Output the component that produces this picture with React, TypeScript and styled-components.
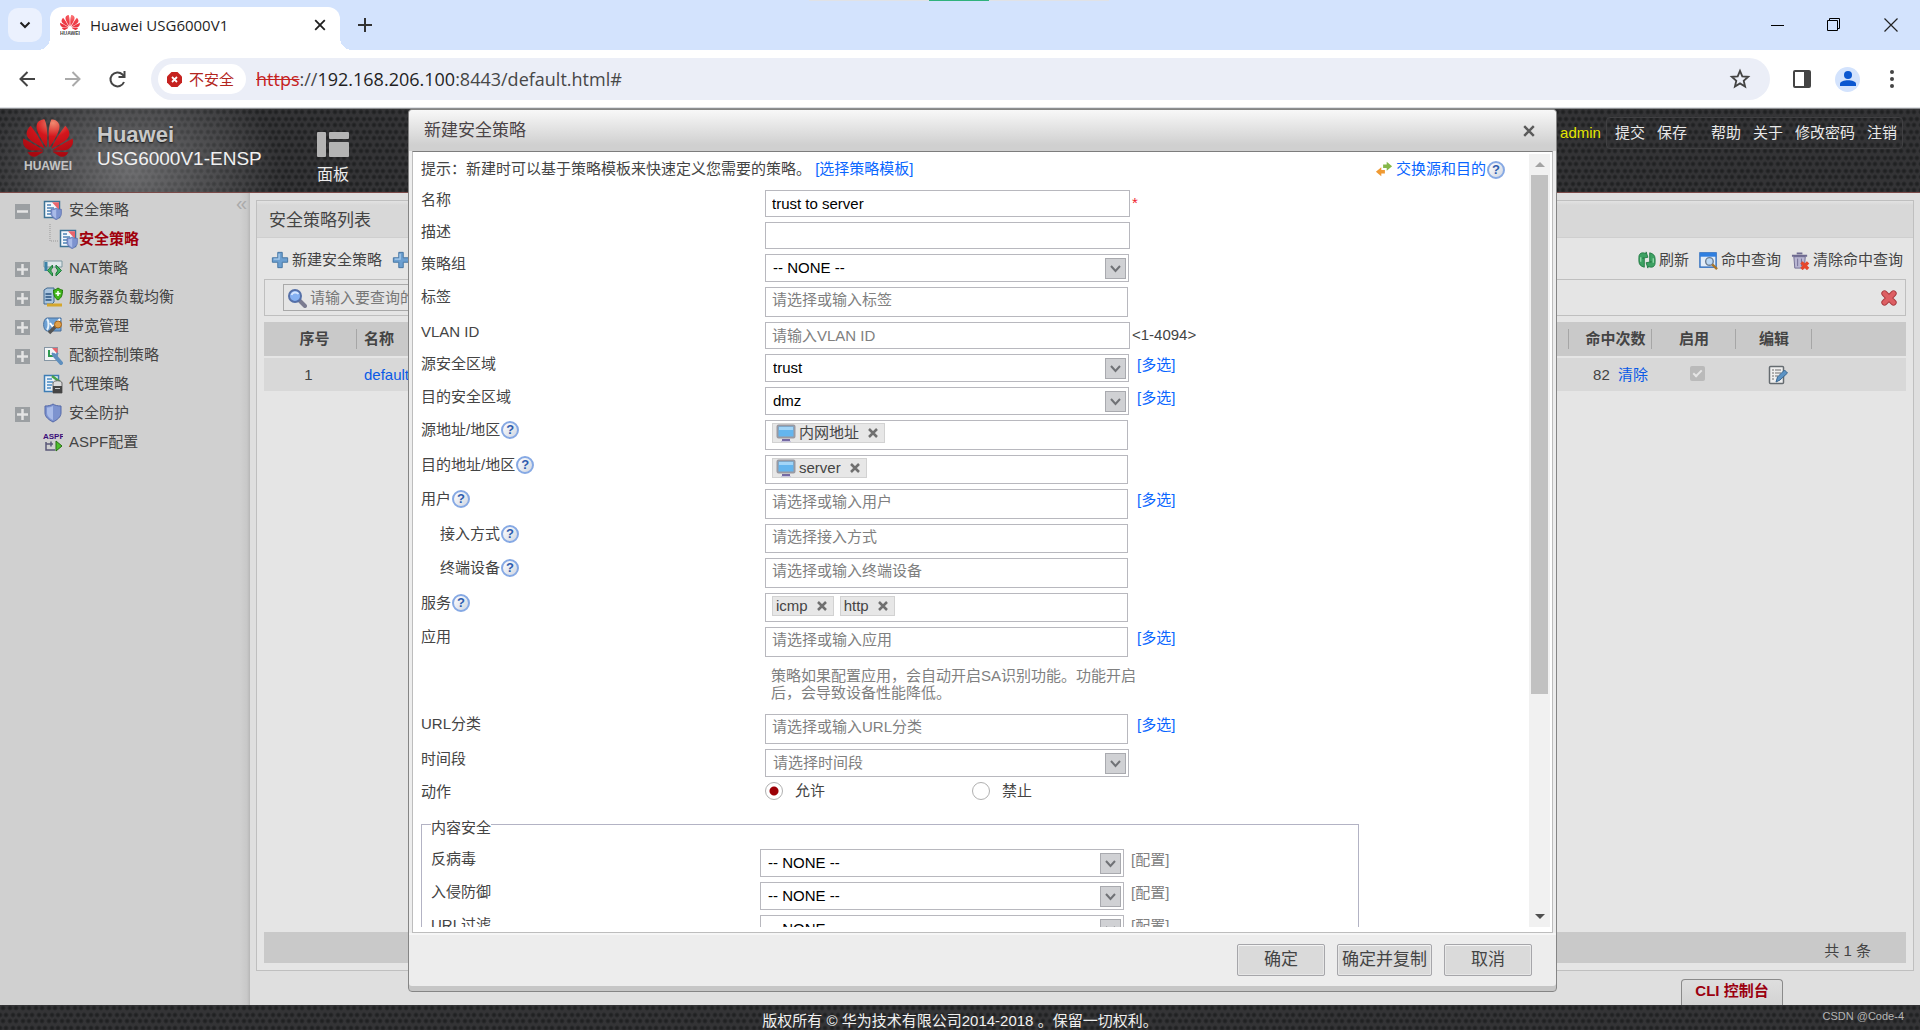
import React from "react";
import styled, { createGlobalStyle, css } from "styled-components";

const UI = `"Liberation Sans", "Noto Sans CJK SC", sans-serif`;
const CHROME = `"Open Sans", "Noto Sans CJK SC", sans-serif`;

const Global = createGlobalStyle`
  *, *::before, *::after { box-sizing: border-box; }
  body { margin: 0; background: #dfdfdf; font: 15px/18px ${UI}; color: #444; }
  button, input, select { font: inherit; color: inherit; }
  button { background: none; border: 0; padding: 0; cursor: pointer; }
  a { text-decoration: none; color: inherit; }
  svg { display: block; flex: none; }
`;

const dots = css`
  background-color: #343436;
  background-image: radial-gradient(circle at 3px 3px, #202122 1px, transparent 3px),
    radial-gradient(circle at 10px 3px, #202122 1px, transparent 3px),
    radial-gradient(circle at 6px 10px, #202122 1px, transparent 3px),
    radial-gradient(circle at 13px 10px, #202122 1px, transparent 3px),
    radial-gradient(circle at 0 10px, #202122 1px, transparent 3px);
  background-size: 13px 13px;
`;

const Page = styled.div`
  display: flex;
  flex-direction: column;
  min-height: 100vh;
  position: relative;
`;

/* ---------- browser frame ---------- */
const TabStrip = styled.div`
  display: flex;
  align-items: flex-end;
  height: 50px;
  background: #d3e3fd;
  position: relative;
`;
const TabMenu = styled.button`
  display: grid;
  place-items: center;
  width: 34px;
  height: 34px;
  margin: 0 8px 8px;
  border-radius: 10px;
  background: #ebf1fe;
`;
const Tab = styled.div`
  display: flex;
  align-items: center;
  width: 290px;
  height: 43px;
  padding: 0 14px 8px 10px;
  background: #fff;
  border-radius: 12px 12px 0 0;
  font: 15px/20px ${CHROME};
  color: #1f1f1f;
  position: relative;
  &::before, &::after {
    content: "";
    position: absolute;
    bottom: 0;
    width: 12px;
    height: 12px;
  }
  &::before { left: -12px; background: radial-gradient(circle at 0 0, transparent 12px, #fff 12px); }
  &::after { right: -12px; background: radial-gradient(circle at 100% 0, transparent 12px, #fff 12px); }
`;
const TabTitle = styled.span`
  flex: 1;
  padding-left: 10px;
`;
const NewTab = styled.button`
  margin: 0 0 18px 18px;
`;
const LoadHint = styled.div`
  position: absolute;
  top: 0;
  left: 50%;
  width: 300px;
  height: 1px;
  margin-left: -151px;
  background: linear-gradient(90deg, #e0e2e6 120px, #2fb27c 120px, #2fb27c 180px, #e0e2e6 180px);
`;
const WindowButtons = styled.div`
  display: flex;
  gap: 43px;
  margin: 0 22px 18px auto;
`;
const Toolbar = styled.div`
  display: flex;
  align-items: center;
  height: 59px;
  padding: 0 18px 0 16px;
  background: #fff;
  border-bottom: 1px solid #8d8f92;
  box-shadow: inset 0 -1px #dfe1e5;
`;
const NavButtons = styled.div`
  display: flex;
  gap: 22px;
  padding-right: 22px;
`;
const Omnibox = styled.div`
  display: flex;
  flex: 1;
  align-items: center;
  height: 42px;
  padding: 0 18px 0 7px;
  border-radius: 21px;
  background: #ebeef7;
`;
const Chip = styled.span`
  display: flex;
  align-items: center;
  gap: 7px;
  height: 30px;
  padding: 0 12px 0 9px;
  border-radius: 15px;
  background: #fff;
  color: #b3261e;
  font: 15px/20px ${CHROME};
`;
const Url = styled.span`
  flex: 1;
  padding-left: 10px;
  font: 18px/24px ${CHROME};
  color: #474747;
  s { color: #c5221f; }
  b { font-weight: 400; color: #1f1f1f; }
`;
const Avatar = styled.span`
  display: grid;
  place-items: center;
  width: 25px;
  height: 25px;
  margin: 0 22px 0 24px;
  border-radius: 50%;
  background: #d3e3fd;
`;
const ToolGroup = styled.div`
  display: flex;
  align-items: center;
  padding-left: 23px;
`;

/* ---------- product header ---------- */
const Header = styled.header`
  ${dots}
  height: 84px;
  border-bottom: 1px solid #7a4a48;
`;
const HeaderGlow = styled.div`
  display: flex;
  height: 100%;
  padding: 10px 17px 0 23px;
  background: radial-gradient(ellipse 150px 110px at 130px 60px, rgba(170, 170, 172, 0.5), transparent);
`;
const Brand = styled.div`
  display: flex;
  flex-direction: column;
  align-items: center;
  width: 50px;
  font-size: 12px;
  font-weight: 700;
  color: #c4c4c4;
`;
const Product = styled.div`
  padding: 4px 0 0 24px;
  width: 244px;
  font-size: 19px;
  line-height: 24px;
  color: #f0f0f0;
  strong { display: block; font-size: 22px; color: #c9c9c9; text-shadow: 0 1px 2px #111; }
`;
const PanelLink = styled.a`
  display: flex;
  flex-direction: column;
  gap: 8px;
  padding-top: 13px;
  font-size: 16px;
  line-height: 20px;
  color: #ececec;
`;
const UserNav = styled.nav`
  display: flex;
  align-items: center;
  margin-left: auto;
  height: 32px;
  margin-top: -2px;
  color: #e8e8e8;
`;
const UserName = styled.span`
  padding-right: 5px;
  color: #e4e400;
`;
const NavBox = styled.div`
  display: flex;
  align-items: center;
  gap: 12px;
  height: 32px;
  padding: 0 5px 0 8px;
  border: 1px solid #404042;
  border-radius: 4px;
`;
const NavPair = styled.span`
  display: flex;
  gap: 12px;
  padding-right: 12px;
`;

/* ---------- body ---------- */
const Body = styled.div`
  display: flex;
  flex: 1;
`;
const Sidebar = styled.nav`
  position: relative;
  width: 250px;
  padding: 2px 0 0 15px;
  background: linear-gradient(90deg, #d0d0d0 240px, #c8c8c8 247px, #b6b6b6 250px);
`;
const Collapse = styled.button`
  position: absolute;
  top: 1px;
  right: 3px;
  color: #aaa;
  font-size: 20px;
  line-height: 18px;
`;
const TreeRow = styled.div<{ $sub?: boolean }>`
  display: flex;
  align-items: center;
  height: 29px;
  gap: ${(p) => (p.$sub ? 0 : 6)}px;
  padding-left: ${(p) => (p.$sub ? 34 : 0)}px;
  font-weight: ${(p) => (p.$sub ? 700 : 400)};
  color: ${(p) => (p.$sub ? "#a0000c" : "#444")};
`;
const Expander = styled.button<{ $kind?: string }>`
  display: grid;
  place-items: center;
  width: 15px;
  height: 15px;
  margin: 3px 7px 0 0;
  background: #9b9fa2;
  visibility: ${(p) => (p.$kind ? "visible" : "hidden")};
`;
const Main = styled.main`
  display: flex;
  flex: 1;
  flex-direction: column;
  padding: 7px 6px 0;
  background: #dfdfdf;
`;
const Panel = styled.section`
  display: flex;
  flex: 1;
  flex-direction: column;
  border: 1px solid #bfbfbf;
  background: #e5e5e5;
`;
const PanelTitle = styled.h1`
  margin: 0;
  padding: 2px 12px 0;
  height: 37px;
  border-bottom: 1px solid #cfcfcf;
  background: linear-gradient(#e2e2e2, #d8d8d8 4px);
  font-size: 17px;
  font-weight: 400;
  line-height: 36px;
`;
const Actions = styled.div`
  display: flex;
  align-items: center;
  height: 41px;
  padding: 3px 10px 0 14px;
  gap: 10px;
`;
const Action = styled.button`
  display: flex;
  align-items: center;
  gap: 3px;
`;
const Push = styled.span`
  flex: 1;
`;
const SearchBar = styled.div`
  display: flex;
  align-items: center;
  justify-content: space-between;
  height: 37px;
  margin: 0 7px 6px;
  padding: 0 7px 0 18px;
  border: 1px solid #bfbfbf;
`;
const SearchBox = styled.label`
  display: flex;
  align-items: center;
  width: 300px;
  height: 27px;
  padding: 0 3px;
  border: 1px solid #a9a9a9;
  input {
    width: 100%;
    padding: 0 3px;
    border: 0;
    outline: 0;
    background: none;
    &::placeholder { color: #777; }
  }
`;
const Table = styled.table`
  margin: 0 7px;
  border-collapse: collapse;
  table-layout: fixed;
  text-align: center;
  th {
    height: 35px;
    padding: 0;
    font-weight: 700;
    background: linear-gradient(#a6a6a6, #a6a6a6) right center / 1px 20px no-repeat #c9c9c9;
  }
  th:last-child { background: #c9c9c9; }
  td { height: 34px; padding: 0; border-top: 2px solid #e5e5e5; background: #d8d8d8; }
  th:first-child { padding-right: 4px; padding-left: 12px; }
  td:first-child { padding-right: 4px; }
  th:nth-child(2), td:nth-child(2) { text-align: left; padding-left: 7px; }
  th:nth-child(3) { padding-left: 10px; }
  td:nth-child(3) { padding-left: 20px; }
  td:nth-child(4) { padding: 0 0 4px 6px; }
  td:nth-child(5) { padding-left: 8px; }
  a { color: #0a5ae6; }
  svg { margin: 0 auto; }
  td:nth-child(3) a { margin-left: 4px; }
`;
const Tick = styled.input`
  appearance: none;
  width: 15px;
  height: 15px;
  margin: 0;
  vertical-align: middle;
  border-radius: 2px;
  background: #bababa;
  position: relative;
  &::after {
    content: "";
    position: absolute;
    left: 5px;
    top: 2px;
    width: 5px;
    height: 9px;
    border: solid #e6e6e6;
    border-width: 0 2px 2px 0;
    transform: rotate(45deg);
  }
`;
const Summary = styled.div`
  height: 31px;
  margin: auto 7px 7px;
  padding-right: 35px;
  background: #c9c9c9;
  line-height: 37px;
  text-align: right;
`;
const CliTab = styled.button`
  align-self: flex-end;
  width: 102px;
  height: 26px;
  margin: 8px 131px 0 0;
  padding-bottom: 3px;
  border: 1px solid #8a8a8a;
  border-bottom: 0;
  border-radius: 4px 4px 0 0;
  background: linear-gradient(#dedede, #d3d3d3);
  font-weight: 700;
  color: #9b0010;
`;
const Footer = styled.footer`
  ${dots}
  display: grid;
  grid-template-columns: 1fr auto 1fr;
  align-items: center;
  height: 25px;
  padding: 5px 16px 0;
  color: #f0f0f0;
  small { font-size: 11px; line-height: 12px; padding-bottom: 10px; text-align: right; color: #b5b5b5; }
`;

/* ---------- dialog ---------- */
const Dialog = styled.section`
  position: absolute;
  top: 109px;
  right: 363px;
  bottom: 38px;
  left: 408px;
  display: flex;
  flex-direction: column;
  border: 1px solid #858585;
  border-radius: 4px;
  background: #ededed;
  box-shadow: inset 0 -5px #c6c6c6;
`;
const DialogHead = styled.div`
  display: flex;
  align-items: center;
  justify-content: space-between;
  height: 41px;
  padding: 0 21px 0 15px;
  border-radius: 4px 4px 0 0;
  background: linear-gradient(#f8f8f8, #d0d0d0 85%);
  h2 { margin: 0; font-size: 17px; font-weight: 400; color: #4a4346; }
`;
const DialogBody = styled.div`
  display: flex;
  flex: 1;
  min-height: 0;
  margin: 0 3px;
  padding: 2px 0 5px;
  border: 1px solid #bdbdbd;
  border-top-color: #7d7d7d;
  background: #fff;
`;
const ScrollArea = styled.form`
  flex: 1;
  min-width: 0;
  overflow: hidden;
  display: flex;
  flex-direction: column;
  gap: 5px;
  padding: 5px 24px 0 8px;
  > * { flex: none; }
`;
const ScrollTrack = styled.div`
  display: flex;
  flex-direction: column;
  align-items: center;
  width: 21px;
  margin-right: 2px;
  background: #f1f1f1;
  svg { margin: 8px 0; }
  i { width: 17px; height: 519px; background: #c1c1c1; }
  svg:last-child { margin-top: auto; }
`;
const Hint = styled.div`
  display: flex;
  align-items: center;
  justify-content: space-between;
  height: 20px;
  margin-bottom: 6px;
`;
const Link = styled.a<{ $muted?: boolean }>`
  color: ${(p) => (p.$muted ? "#808080" : "#0a66ff")};
`;
const Swap = styled.span`
  display: flex;
  align-items: center;
  svg { margin-right: 3px; }
`;
const HelpButton = styled.button`
  display: inline-block;
  width: 18px;
  height: 18px;
  margin: 1px 0 0 1px;
  vertical-align: top;
  border: 2px solid #86a9e4;
  border-radius: 50%;
  background: linear-gradient(135deg, #fff, #d0d6e2);
  color: #2e5cae;
  font-size: 13px;
  font-weight: 700;
  line-height: 14px;
`;
const Row = styled.div<{ $inset?: boolean }>`
  display: grid;
  grid-template-columns: ${(p) => (p.$inset ? 329 : 344)}px ${(p) => (p.$inset ? 364 : 365)}px auto;
  align-items: start;
`;
const FieldLabel = styled.span<{ $indent?: boolean }>`
  height: 18px;
  padding-left: ${(p) => (p.$indent ? 19 : 0)}px;
  line-height: 20px;
`;
const TextInput = styled.input`
  width: 365px;
  height: 27px;
  padding: 0 6px;
  border: 1px solid #b8b8be;
  outline: 0;
  background: #fff;
  color: #000;
  &::placeholder { color: #808080; }
`;
const SelectWrap = styled.span`
  position: relative;
  width: 364px;
  height: 28px;
  select {
    appearance: none;
    display: block;
    width: 100%;
    height: 28px;
    padding: 0 30px 0 7px;
    border: 1px solid #b8b8be;
    border-radius: 0;
    background: #fff;
    outline: 0;
  }
  svg { position: absolute; right: 3px; top: 4px; pointer-events: none; }
`;
const Select = styled.select<{ $empty?: boolean }>`
  color: ${(p) => (p.$empty ? "#808080" : "#000")};
`;
const TokenBox = styled.div<{ $low?: boolean }>`
  display: flex;
  align-items: flex-start;
  gap: 6px;
  width: 363px;
  height: ${(p) => (p.$low ? 29 : 30)}px;
  padding: 2px 6px;
  border: 1px solid #b8b8be;
  input {
    flex: 1;
    min-width: 0;
    height: 19px;
    padding: 0;
    border: 0;
    outline: 0;
    background: none;
    &::placeholder { color: #808080; }
  }
`;
const Token = styled.span`
  display: flex;
  align-items: center;
  height: 20px;
  padding: 0 6px 0 3px;
  border: 1px solid #d2d2d2;
  background: #e7e7e7;
  gap: 3px;
  button { padding-left: 6px; }
`;
const Suffix = styled.span<{ $note?: boolean }>`
  padding-left: ${(p) => (p.$note ? 2 : 7)}px;
  line-height: ${(p) => (p.$note ? 26 : 22)}px;
  em { font-style: normal; line-height: 22px; color: #f0202c; }
`;
const Note = styled.p`
  width: 376px;
  margin: 5px 0 8px 350px;
  line-height: 17px;
  color: #808080;
`;
const Radios = styled.div`
  display: flex;
`;
const RadioLabel = styled.label`
  display: flex;
  flex: none;
  align-items: center;
  gap: 12px;
  width: 207px;
  height: 18px;
  input {
    appearance: none;
    width: 18px;
    height: 18px;
    margin: 0;
    border: 1px solid #b0b0b0;
    border-radius: 50%;
    background: #fff;
  }
  input:checked { background: radial-gradient(circle, #9c0006 4px, #fff 5px); }
`;
const Fieldset = styled.fieldset`
  display: flex;
  flex-direction: column;
  gap: 5px;
  width: 938px;
  min-width: 0;
  margin: 6px 0 0;
  padding: 12px 9px 40px;
  border: 1px solid #b3b3c4;
  legend { padding: 8px 0 0; line-height: 18px; }
`;
const DialogFoot = styled.div`
  display: flex;
  justify-content: flex-end;
  gap: 12px;
  height: 58px;
  padding: 9px 24px 0 0;
  border-top: 2px solid #f6f6f6;
`;
const Button = styled.button`
  min-width: 88px;
  height: 32px;
  padding: 0 4px;
  border: 1px solid #a6a6aa;
  border-radius: 2px;
  background: #dadada;
  box-shadow: inset 0 1px #f4f4f4, inset 0 0 0 1px #e6e6e6;
  font-size: 17px;
`;

/* ---------- drawings ---------- */
const PETALS =
  "M3.67 6.14S1.82 7.91 1.72 9.78v.35c.08 1.51 1.22 2.4 1.22 2.4 1.83 1.79 6.26 4.04 7.3 4.55 0 0 .06.03.1-.01l.02-.04v-.04C7.52 10.8 3.67 6.14 3.67 6.14zM9.65 18.6c-.02-.08-.1-.08-.1-.08l-7.38.26c.8 1.43 2.15 2.53 3.56 2.2.96-.25 3.16-1.78 3.88-2.3.06-.05.04-.09.04-.09zm.08-.78C6.49 15.63.21 12.28.21 12.28c-.15.46-.2.9-.21 1.3v.07c0 1.07.4 1.82.4 1.82.8 1.69 2.34 2.2 2.34 2.2.7.3 1.4.31 1.4.31.12.02 4.4 0 5.54 0 .05 0 .08-.05.08-.05v-.06c0-.03-.03-.05-.03-.05zM9.06 3.19a3.42 3.42 0 00-2.57 3.15v.41c.03.6.16 1.05.16 1.05.66 2.9 3.86 7.65 4.55 8.65.05.05.1.03.1.03a.1.1 0 00.06-.1c1.06-10.6-1.11-13.42-1.11-13.42-.32.02-1.19.23-1.19.23zm8.299 2.27s-.49-1.8-2.44-2.28c0 0-.57-.14-1.17-.22 0 0-2.18 2.81-1.12 13.43.01.07.06.08.06.08.07.03.1-.03.1-.03.72-1.03 3.9-5.76 4.55-8.64 0 0 .36-1.4.02-2.34zm-2.92 13.07s-.07 0-.09.05c0 0-.01.07.03.1.7.51 2.85 2 3.88 2.3 0 0 .16.05.43.06h.14c.69-.02 1.9-.37 3-2.26l-7.4-.25zm7.83-8.41c.14-2.06-1.94-3.97-1.94-3.98 0 0-3.85 4.66-6.67 10.8 0 0-.03.08.02.13l.04.01h.06c1.06-.53 5.46-2.77 7.28-4.54 0 0 1.15-.93 1.21-2.42zm1.52 2.14s-6.28 3.37-9.52 5.55c0 0-.05.04-.03.11 0 0 .03.06.07.06 1.16 0 5.56 0 5.67-.02 0 0 .57-.02 1.27-.29 0 0 1.56-.5 2.37-2.27 0 0 .73-1.45.17-3.14z";

const Flower = ({ size, bright }: { size: number; bright?: boolean }) => (
  <svg width={size} height={Math.round(size * 0.76)} viewBox="0 2.9 24 18.2" aria-hidden="true">
    <defs>
      <radialGradient id={bright ? "petal-bright" : "petal-deep"} cx="0.6" cy="0.1" r="0.9">
        <stop offset="0" stopColor={bright ? "#fb7474" : "#f08a70"} />
        <stop offset="0.4" stopColor={bright ? "#f0404a" : "#d4161c"} />
        <stop offset="1" stopColor={bright ? "#e8303c" : "#a80810"} />
      </radialGradient>
    </defs>
    <path d={PETALS} fill={`url(#${bright ? "petal-bright" : "petal-deep"})`} />
  </svg>
);

const Favicon = styled.span`
  display: flex;
  flex-direction: column;
  align-items: center;
  width: 20px;
`;
const Svg = ({ s = 20, children }: { s?: number; children: React.ReactNode }) => (
  <svg width={s} height={s} viewBox="0 0 20 20" fill="none" aria-hidden="true">{children}</svg>
);
const shield = (x: number, y: number, k: number) => (
  <g transform={`translate(${x} ${y}) scale(${k})`}>
    <path d="M0 2c3 0 6-.5 8-2 2 1.500 5 2 8 2v7c0 4-4 7-8 9-4-2-8-5-8-9z" fill="#7d93cf" stroke="#5468a8" />
    <path d="M2 3.500c2 0 4-.5 6-1.500v14c-3-1.500-6-4-6-7z" fill="#a9bbe8" />
  </g>
);
const PolicyIcon = () => (
  <Svg>
    <rect x="1.500" y="1.500" width="15" height="16" fill="#f4f8fc" stroke="#3d7396" strokeWidth="1.500" />
    <path d="M9 2.200h7V10z" fill="#e9656c" />
    <path d="M4 5h4M4 8h7M4 11h4M4 14h4" stroke="#4d83b5" strokeWidth="1.500" />
    {shield(8, 8, 0.65)}
  </Svg>
);
const NatIcon = () => (
  <Svg>
    <path d="M1 3h18v6H1z" fill="#dfe7ea" stroke="#7d97a0" />
    <path d="M3 4v9" stroke="#3c82a8" strokeWidth="3" />
    <path d="M9.500 7l-5 5.500 5 5.500v-3c-2-1-2-4 0-5zM13 7l5.500 5.500L13 18v-3c2-1 2-4 0-5z" fill="#3fae5c" stroke="#207a3c" />
  </Svg>
);
const ServerIcon = () => (
  <Svg>
    <path d="M1 3l3-2h7v14l-2 2H1z" fill="#a9c4de" stroke="#41688f" />
    <path d="M2.500 7h6M2.500 10h6M2.500 13h6" stroke="#27527f" strokeWidth="1.500" />
    <path d="M4 18h15" stroke="#d5a72d" strokeWidth="3" />
    <path d="M10.500 3c2 0 3-1 4.500-2 1.500 1 3 2 4.500 2 0 5-1 8-4.500 10-3.500-2-4.500-5-4.500-10z" fill="#3fb618" stroke="#237a0a" />
    <path d="M15 4v5M12.500 6.500h5" stroke="#fff" strokeWidth="1.500" />
  </Svg>
);
const BandIcon = () => (
  <Svg>
    <path d="M4 2h14v13H4C-.5 14-.5 3 4 2z" fill="#6ea1d4" stroke="#476f9c" />
    <path d="M4 3c2 2 2 9 0 11" stroke="#e6f1fa" strokeWidth="2" />
    <path d="M7 7l3 4 7-8" stroke="#fff" strokeWidth="2" />
    <path d="M6 17l8-8" stroke="#555" strokeWidth="3.500" />
    <circle cx="15" cy="8.500" r="3.500" fill="#e0a04a" stroke="#a5641a" />
  </Svg>
);
const QuotaIcon = () => (
  <Svg>
    <rect x="1.500" y="2.500" width="13" height="13" fill="#f2f4f6" stroke="#8596a4" />
    <path d="M9 3h5.500v6z" fill="#e9656c" />
    <path d="M6 5v6h5" stroke="#2f9b50" strokeWidth="2" />
    <path d="M11 10l7 8" stroke="#5f8fbe" strokeWidth="4" strokeLinecap="round" />
    <path d="M9 8l3 3 3-3" stroke="#5f8fbe" strokeWidth="2" />
  </Svg>
);
const ProxyIcon = () => (
  <Svg>
    <rect x="1.500" y="1.500" width="14" height="16" fill="#eaf2f9" stroke="#3d7db5" strokeWidth="1.500" />
    <path d="M4 5h5M4 8h6M4 11h5M4 14h4" stroke="#4b8cc4" strokeWidth="1.500" />
    <path d="M9 2l8 6" stroke="#46a049" strokeWidth="2.500" />
    <path d="M10 19V9c0-3 9-3 9 0v10z" fill="#dcdcdc" stroke="#666" />
    <path d="M10 12h9v7h-9z" fill="#444" />
    <path d="M12 14.500h5" stroke="#ccc" />
  </Svg>
);
const ShieldIcon = () => <Svg>{shield(2, 1, 1)}</Svg>;
const AspfIcon = () => (
  <Svg>
    <text x="0" y="7" fontSize="8" fontWeight="700" fill="#3b0f7a" fontFamily="Liberation Sans">ASPF</text>
    <path d="M3 10v8h9M3 12h7M8 9.500v5" stroke="#5a5878" strokeWidth="1.500" />
    <path d="M13 9l6 5-6 5z" fill="#4cbf2c" stroke="#276c15" />
  </Svg>
);
const Plus = () => (
  <Svg s={18}>
    <path d="M7.500 1.500h5v6h6v5h-6v6h-5v-6h-6v-5h6z" fill="#6c9fd0" stroke="#3f719f" />
    <path d="M9 3v6H3" stroke="#a9cbea" strokeWidth="1.500" />
  </Svg>
);
const Lens = () => (
  <Svg>
    <path d="M12 12l6 6" stroke="#7c7c90" strokeWidth="4" strokeLinecap="round" />
    <circle cx="8" cy="8" r="6" fill="#85b1f2" stroke="#5570a8" strokeWidth="2" />
    <path d="M4.500 7c1-3 5-3.500 7-1" stroke="#d5e6ff" strokeWidth="2" />
  </Svg>
);
const Refresh = () => (
  <Svg s={18}>
    <path d="M1 11V7c0-5 4-6 8-4V1l2 6-6 1h2v10C3 17 1 15 1 11z" fill="#3da162" stroke="#237a44" />
    <path d="M19 9v4c0 5-4 6-8 4v2l-2-6 6-1h-2V2c4 1 6 3 6 7z" fill="#3da162" stroke="#237a44" />
    <path d="M3 12V7M17 8v5" stroke="#90d6a8" strokeWidth="1.500" />
  </Svg>
);
const HitQuery = () => (
  <Svg s={19}>
    <rect x="1" y="2" width="17" height="15" fill="#e3ecf7" stroke="#2f6fc0" strokeWidth="1.500" />
    <path d="M1 4h17" stroke="#2f7fe0" strokeWidth="4" />
    <circle cx="11" cy="11" r="4" fill="#bcd8f4" stroke="#6d7e92" strokeWidth="1.500" />
    <path d="M14 14l5 5" stroke="#a9752a" strokeWidth="2.500" />
  </Svg>
);
const Trash = () => (
  <Svg s={19}>
    <path d="M3 6h12l-1 12H4z" fill="#b9b6d2" stroke="#716d92" />
    <path d="M1 5h16M6 2.500h6" stroke="#6e6a90" strokeWidth="2" />
    <path d="M7 8v8M11 8v8" stroke="#716d92" />
    <path d="M11 12l7 7M18 12l-7 7" stroke="#e5472c" strokeWidth="3.500" />
  </Svg>
);
const RedCross = () => (
  <Svg s={18}>
    <path d="M5 5l10 10M15 5L5 15" stroke="#a83a3f" strokeWidth="7" strokeLinecap="round" />
    <path d="M5 5l10 10M15 5L5 15" stroke="#dd5f63" strokeWidth="5" strokeLinecap="round" />
  </Svg>
);
const EditIcon = () => (
  <Svg>
    <rect x="1.500" y="1.500" width="14" height="17" rx="1" fill="#efefef" stroke="#656b70" strokeWidth="1.500" />
    <path d="M4 5h2M7 5h6M4 8h2M7 8h6M4 11h2M7 11h3M4 14h2" stroke="#999" strokeWidth="1.500" />
    <path d="M8 17l1.500-5 7-7 3 3-7.500 7z" fill="#5b93c5" stroke="#3a668f" />
  </Svg>
);
const SwapIcon = () => (
  <Svg s={18}>
    <path d="M9 5h4V2l6 5-6 5V9H9z" fill="#86b84a" />
    <path d="M11 11H7V8l-6 5 6 5v-3h4z" fill="#f09a33" />
  </Svg>
);
const Monitor = () => (
  <Svg>
    <rect x="1.500" y="2.500" width="17" height="12" rx="1" fill="#64b5ee" stroke="#9a9aa2" strokeWidth="2" />
    <path d="M3 4h14v3H3z" fill="#a2d5f8" />
    <path d="M6 17h8" stroke="#756aa4" strokeWidth="2" />
    <path d="M5 18.500h10" stroke="#c9c4de" />
  </Svg>
);
const SmallX = ({ s = 10, w = 2.5, c = "#707070" }) => (
  <svg width={s} height={s} viewBox="0 0 10 10" aria-hidden="true">
    <path d="M1 1l8 8M9 1L1 9" stroke={c} strokeWidth={w} />
  </svg>
);
const Arrow = () => (
  <svg width="21" height="21" viewBox="0 0 21 21" fill="none" aria-hidden="true">
    <rect x="0.500" y="0.500" width="20" height="20" fill="#d0d1d4" stroke="#a9aaaf" />
    <path d="M6 8l4.500 5L15 8" stroke="#707276" strokeWidth="2" />
  </svg>
);

/* ---------- form parts ---------- */
const Help = () => <HelpButton type="button" aria-label="帮助">?</HelpButton>;

type RowProps = {
  id: string;
  label: string;
  help?: boolean;
  indent?: boolean;
  inset?: boolean;
  more?: boolean;
  suffix?: React.ReactNode;
  children: React.ReactNode;
};
const Field = ({ id, label, help, indent, inset, more, suffix, children }: RowProps) => (
  <Row $inset={inset}>
    <FieldLabel $indent={indent}>
      <label htmlFor={id}>{label}</label>
      {help && <Help />}
    </FieldLabel>
    {children}
    {more && <Suffix><Link href="#">[多选]</Link></Suffix>}
    {suffix}
  </Row>
);
const Drop = ({ id, value, empty }: { id: string; value: string; empty?: boolean }) => (
  <SelectWrap>
    <Select id={id} $empty={empty}><option>{value}</option></Select>
    <Arrow />
  </SelectWrap>
);
const Tokens = ({ id, items = [], icon, low, hint }: { id: string; items?: string[]; icon?: boolean; low?: boolean; hint?: string }) => (
  <TokenBox $low={low}>
    {items.map((t) => (
      <Token key={t}>
        {icon && <Monitor />}
        {t}
        <button type="button" aria-label={`移除 ${t}`}><SmallX /></button>
      </Token>
    ))}
    <input id={id} placeholder={hint} />
  </TokenBox>
);

const tree: { label: string; icon: React.ReactNode; kind?: string; sub?: boolean }[] = [
  { label: "安全策略", icon: <PolicyIcon />, kind: "minus" },
  { label: "安全策略", icon: <PolicyIcon />, sub: true },
  { label: "NAT策略", icon: <NatIcon />, kind: "plus" },
  { label: "服务器负载均衡", icon: <ServerIcon />, kind: "plus" },
  { label: "带宽管理", icon: <BandIcon />, kind: "plus" },
  { label: "配额控制策略", icon: <QuotaIcon />, kind: "plus" },
  { label: "代理策略", icon: <ProxyIcon /> },
  { label: "安全防护", icon: <ShieldIcon />, kind: "plus" },
  { label: "ASPF配置", icon: <AspfIcon /> },
];

const Browser = () => (
  <>
    <TabStrip>
      <LoadHint />
      <TabMenu aria-label="搜索标签页">
        <svg width="12" height="8" viewBox="0 0 12 8" fill="none"><path d="M1.500 1.500L6 6l4.500-4.500" stroke="#1f1f1f" strokeWidth="2" /></svg>
      </TabMenu>
      <Tab>
        <Favicon>
          <Flower size={20} bright />
          <svg width="20" height="5" viewBox="0 0 20 5"><text x="0" y="5" fontSize="5" fontWeight="700" fontFamily="Liberation Sans" fill="#444">HUAWEI</text></svg>
        </Favicon>
        <TabTitle>Huawei USG6000V1</TabTitle>
        <button aria-label="关闭标签页"><SmallX s={12} w={1.500} c="#1f1f1f" /></button>
      </Tab>
      <NewTab aria-label="新标签页">
        <svg width="14" height="14" viewBox="0 0 14 14"><path d="M7 0v14M0 7h14" stroke="#333" strokeWidth="2" /></svg>
      </NewTab>
      <WindowButtons>
        <button aria-label="最小化"><svg width="13" height="14" viewBox="0 0 13 14"><path d="M0 7.500h13" stroke="#000" /></svg></button>
        <button aria-label="还原"><svg width="14" height="14" viewBox="0 0 14 14" fill="none"><path d="M.5 2.500h10v10H.5zM2.500 2.500v-2h10v10h-2" stroke="#000" /></svg></button>
        <button aria-label="关闭"><svg width="14" height="14" viewBox="0 0 14 14"><path d="M.5.5l13 13M13.500.5l-13 13" stroke="#222" strokeWidth="1.200" /></svg></button>
      </WindowButtons>
    </TabStrip>
    <Toolbar>
      <NavButtons>
        <button aria-label="后退"><svg width="23" height="20" viewBox="0 0 23 20" fill="none"><path d="M19 10H5M11.500 3L4.500 10l7 7" stroke="#444" strokeWidth="2" /></svg></button>
        <button aria-label="前进"><svg width="23" height="20" viewBox="0 0 23 20" fill="none"><path d="M4 10h14M11.500 3l7 7-7 7" stroke="#aaa" strokeWidth="2" /></svg></button>
        <button aria-label="重新加载"><svg width="23" height="20" viewBox="0 0 23 20" fill="none"><path d="M18 13a7 7 0 1 1-1.500-7.500L18 7" stroke="#444" strokeWidth="2" /><path d="M18.500 2v6h-6" stroke="#444" strokeWidth="2" /></svg></button>
      </NavButtons>
      <Omnibox>
        <Chip>
          <svg width="15" height="15" viewBox="0 0 15 15"><path d="M4.500 0h6L15 4.500v6L10.500 15h-6L0 10.500v-6z" fill="#c5221f" /><path d="M5 5l5 5M10 5l-5 5" stroke="#fff" strokeWidth="1.800" /></svg>
          不安全
        </Chip>
        <Url><s>https</s>://<b>192.168.206.100</b>:8443/default.html#</Url>
        <button aria-label="添加书签"><svg width="24" height="24" viewBox="0 0 24 24" fill="none"><path d="M12 3.800l2.300 5.500 5.900.5-4.500 3.900 1.400 5.800L12 16.400l-5.100 3.100 1.400-5.800-4.500-3.900 5.900-.5z" stroke="#444" strokeWidth="1.800" /></svg></button>
      </Omnibox>
      <ToolGroup>
        <button aria-label="侧边栏"><svg width="18" height="18" viewBox="0 0 18 18"><rect x="1" y="1" width="16" height="16" rx="1" fill="#fff" stroke="#444" strokeWidth="2" /><path d="M11 1h6v16h-6z" fill="#444" /></svg></button>
        <Avatar><svg width="16" height="16" viewBox="0 0 16 16" fill="#0b57d0"><circle cx="8" cy="4" r="4" /><path d="M0 15v-2c0-5 16-5 16 0v2z" /></svg></Avatar>
        <button aria-label="菜单"><svg width="20" height="20" viewBox="0 0 20 20" fill="#444"><circle cx="10" cy="3" r="2" /><circle cx="10" cy="10" r="2" /><circle cx="10" cy="17" r="2" /></svg></button>
      </ToolGroup>
    </Toolbar>
  </>
);

const PolicyDialog = () => (
  <Dialog role="dialog" aria-labelledby="dlg-title">
    <DialogHead>
      <h2 id="dlg-title">新建安全策略</h2>
      <button aria-label="关闭"><SmallX s={12} w={2} c="#5a5a5a" /></button>
    </DialogHead>
    <DialogBody>
      <ScrollArea onSubmit={(e) => e.preventDefault()}>
        <Hint>
          <span>提示：新建时可以基于策略模板来快速定义您需要的策略。 <Link href="#">[选择策略模板]</Link></span>
          <Swap><SwapIcon /><Link href="#">交换源和目的</Link><Help /></Swap>
        </Hint>
        <Field id="name" label="名称" suffix={<Suffix $note><em>*</em></Suffix>}><TextInput id="name" defaultValue="trust to server" /></Field>
        <Field id="desc" label="描述"><TextInput id="desc" /></Field>
        <Field id="group" label="策略组"><Drop id="group" value="-- NONE --" /></Field>
        <Field id="tag" label="标签"><Tokens id="tag" hint="请选择或输入标签" /></Field>
        <Field id="vlan" label="VLAN ID" suffix={<Suffix $note>&lt;1-4094&gt;</Suffix>}><TextInput id="vlan" placeholder="请输入VLAN ID" /></Field>
        <Field id="szone" label="源安全区域" more><Drop id="szone" value="trust" /></Field>
        <Field id="dzone" label="目的安全区域" more><Drop id="dzone" value="dmz" /></Field>
        <Field id="saddr" label="源地址/地区" help><Tokens id="saddr" icon items={["内网地址"]} /></Field>
        <Field id="daddr" label="目的地址/地区" help><Tokens id="daddr" icon low items={["server"]} /></Field>
        <Field id="user" label="用户" help more><Tokens id="user" hint="请选择或输入用户" /></Field>
        <Field id="access" label="接入方式" help indent><Tokens id="access" low hint="请选择接入方式" /></Field>
        <Field id="device" label="终端设备" help indent><Tokens id="device" hint="请选择或输入终端设备" /></Field>
        <Field id="service" label="服务" help><Tokens id="service" low items={["icmp", "http"]} /></Field>
        <Field id="app" label="应用" more><Tokens id="app" hint="请选择或输入应用" /></Field>
        <Note>策略如果配置应用，会自动开启SA识别功能。功能开启后，会导致设备性能降低。</Note>
        <Field id="url" label="URL分类" more><Tokens id="url" hint="请选择或输入URL分类" /></Field>
        <Field id="time" label="时间段"><Drop id="time" value="请选择时间段" empty /></Field>
        <Row role="radiogroup" aria-label="动作">
          <FieldLabel>动作</FieldLabel>
          <Radios>
            <RadioLabel><input type="radio" name="act" defaultChecked />允许</RadioLabel>
            <RadioLabel><input type="radio" name="act" />禁止</RadioLabel>
          </Radios>
        </Row>
        <Fieldset>
          <legend>内容安全</legend>
          {["反病毒", "入侵防御", "URL过滤"].map((t, i) => (
            <Field key={t} id={`sec${i}`} label={t} inset suffix={<Suffix><Link $muted href="#">[配置]</Link></Suffix>}>
              <Drop id={`sec${i}`} value="-- NONE --" />
            </Field>
          ))}
        </Fieldset>
      </ScrollArea>
      <ScrollTrack>
        <svg width="10" height="5" viewBox="0 0 10 5"><path d="M0 5l5-5 5 5z" fill="#a3a3a3" /></svg>
        <i />
        <svg width="10" height="5" viewBox="0 0 10 5"><path d="M0 0l5 5 5-5z" fill="#505050" /></svg>
      </ScrollTrack>
    </DialogBody>
    <DialogFoot>
      <Button>确定</Button>
      <Button>确定并复制</Button>
      <Button>取消</Button>
    </DialogFoot>
  </Dialog>
);

export default function App() {
  return (
    <Page>
      <Global />
      <Browser />
      <Header>
        <HeaderGlow>
          <Brand><Flower size={50} /><span>HUAWEI</span></Brand>
          <Product><strong>Huawei</strong>USG6000V1-ENSP</Product>
          <PanelLink href="#">
            <svg width="32" height="25" viewBox="0 0 32 25" fill="#b4b4b4"><rect width="9" height="25" rx="1" /><rect x="12" width="20" height="7" rx="1" /><rect x="12" y="10" width="20" height="15" rx="1" /></svg>
            面板
          </PanelLink>
          <UserNav>
            <UserName>admin</UserName>
            <NavBox>
              <NavPair><a href="#">提交</a><a href="#">保存</a></NavPair>
              <a href="#">帮助</a><a href="#">关于</a><a href="#">修改密码</a><a href="#">注销</a>
            </NavBox>
          </UserNav>
        </HeaderGlow>
      </Header>
      <Body>
        <Sidebar>
          <Collapse aria-label="收起">«</Collapse>
          {tree.map((n, i) => (
            <TreeRow key={i} $sub={n.sub}>
              {n.sub ? (
                <svg width="10" height="29" viewBox="0 0 10 29" fill="none"><path d="M1 0v17h9" stroke="#999" strokeDasharray="1 1" /></svg>
              ) : (
                <Expander $kind={n.kind} aria-label={n.kind === "minus" ? "折叠" : "展开"}>
                  <svg width="11" height="11" viewBox="0 0 11 11"><path d={n.kind === "minus" ? "M0 5.500h11" : "M0 5.500h11M5.500 0v11"} stroke="#e4e4e4" strokeWidth="2.500" /></svg>
                </Expander>
              )}
              {n.icon}
              <a href="#">{n.label}</a>
            </TreeRow>
          ))}
        </Sidebar>
        <Main>
          <Panel>
            <PanelTitle>安全策略列表</PanelTitle>
            <Actions>
              <Action><Plus />新建安全策略</Action>
              <Action aria-label="新建安全策略组"><Plus /></Action>
              <Push />
              <Action><Refresh />刷新</Action>
              <Action><HitQuery />命中查询</Action>
              <Action><Trash />清除命中查询</Action>
            </Actions>
            <SearchBar>
              <SearchBox><Lens /><input aria-label="查询" placeholder="请输入要查询的内容" /></SearchBox>
              <button aria-label="清除查询"><RedCross /></button>
            </SearchBar>
            <Table>
              <colgroup><col width="93" /><col /><col width="83" /><col width="84" /><col width="76" /><col width="94" /></colgroup>
              <thead><tr><th>序号</th><th>名称</th><th>命中次数</th><th>启用</th><th>编辑</th><th aria-label="空" /></tr></thead>
              <tbody>
                <tr>
                  <td>1</td>
                  <td><a href="#">default</a></td>
                  <td>82 <a href="#">清除</a></td>
                  <td><Tick type="checkbox" aria-label="启用" defaultChecked disabled /></td>
                  <td><EditIcon /></td>
                  <td />
                </tr>
              </tbody>
            </Table>
            <Summary>共 1 条</Summary>
          </Panel>
          <CliTab>CLI 控制台</CliTab>
        </Main>
      </Body>
      <Footer>
        <span />
        <span>版权所有 © 华为技术有限公司2014-2018 。保留一切权利。</span>
        <small>CSDN @Code-4</small>
      </Footer>
      <PolicyDialog />
    </Page>
  );
}
